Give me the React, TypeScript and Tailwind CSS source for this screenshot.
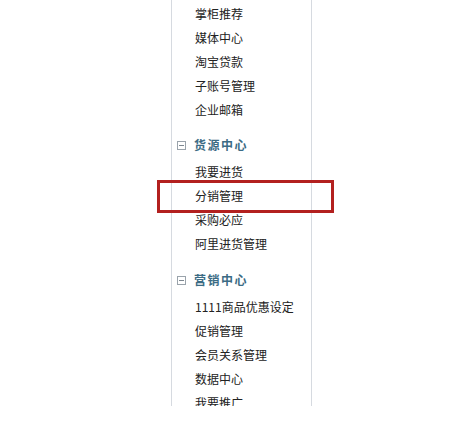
import React from 'react'

const font = { fontFamily: '"Noto Sans CJK SC", "Noto Sans", sans-serif' }

type Section = { title?: string; items: string[] }

const sections: Section[] = [
  { items: ['掌柜推荐', '媒体中心', '淘宝贷款', '子账号管理', '企业邮箱'] },
  { title: '货源中心', items: ['我要进货', '分销管理', '采购必应', '阿里进货管理'] },
  { title: '营销中心', items: ['1111商品优惠设定', '促销管理', '会员关系管理', '数据中心', '我要推广'] },
]

function MinusBox() {
  return (
    <svg width="9" height="9" viewBox="0 0 9 9" className="shrink-0">
      <rect x="0.5" y="0.5" width="8" height="8" fill="white" stroke="#9aa3ab" />
      <line x1="2" y1="4.5" x2="7" y2="4.5" stroke="#7d8790" />
    </svg>
  )
}

export default function App() {
  return (
    <div className="relative w-[466px] h-[421px] bg-white overflow-hidden" style={font}>
      <div className="ml-[171px] w-[141px] h-[406px] overflow-hidden border-l border-r border-[#d6dae0] bg-white pt-[2px]">
        {sections.map((s, i) => (
          <div key={i}>
            {s.title && (
              <div className={`${i === 1 ? 'mt-[11px]' : 'mt-[12px]'} mb-[3px] h-[24px] flex items-center gap-[8px] pl-[5px]`}>
                <MinusBox />
                <span className="text-[12px] font-bold tracking-[1.5px] text-[#3b6b84] leading-none">{s.title}</span>
              </div>
            )}
            {s.items.map((it) => (
              <div key={it} className="h-[24px] flex items-center pl-[23px] text-[12px] text-[#222] leading-none">
                {it}
              </div>
            ))}
          </div>
        ))}
      </div>
      {/* highlight box */}
      <div className="absolute left-[157px] top-[180px] w-[177px] h-[33px] border-[3px] border-[#b3201f]" />
    </div>
  )
}
